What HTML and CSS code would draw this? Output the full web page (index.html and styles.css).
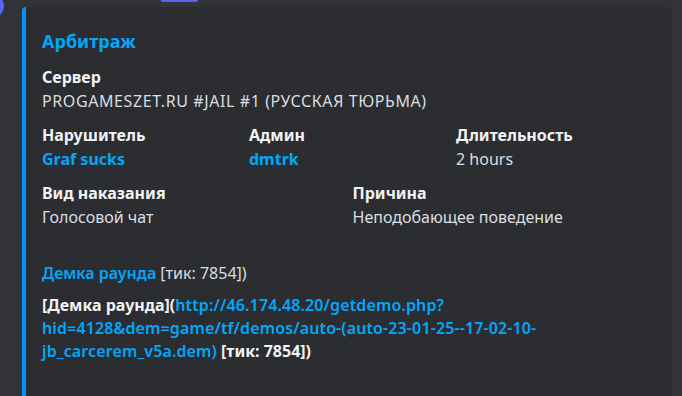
FILE: index.html
```html
<!DOCTYPE html>
<html lang="ru">
<head>
<meta charset="utf-8">
<title>Арбитраж</title>
<link rel="stylesheet" href="styles.css">
</head>
<body>
<div class="page">
  <span class="deco-avatar"></span>
  <span class="deco-button"></span>
  <article class="embed">
    <h2 class="embed-title">Арбитраж</h2>
    <div class="fields">
      <div class="field full">
        <div class="field-name">Сервер</div>
        <div class="field-value wide">PROGAMESZET.RU #JAIL #1 (РУССКАЯ ТЮРЬМА)</div>
      </div>
      <div class="field third">
        <div class="field-name">Нарушитель</div>
        <div class="field-value"><a class="link bolder">Graf sucks</a></div>
      </div>
      <div class="field third">
        <div class="field-name">Админ</div>
        <div class="field-value"><a class="link bolder">dmtrk</a></div>
      </div>
      <div class="field third">
        <div class="field-name">Длительность</div>
        <div class="field-value">2 hours</div>
      </div>
      <div class="field half">
        <div class="field-name">Вид наказания</div>
        <div class="field-value">Голосовой чат</div>
      </div>
      <div class="field half">
        <div class="field-name">Причина</div>
        <div class="field-value">Неподобающее поведение</div>
      </div>
    </div>
    <p class="demo-line"><a class="link strong">Демка раунда</a> [тик: 7854])</p>
    <p class="embed-extra"><b class="bold">[Демка раунда](</b><a class="link strong url">http://46.174.48.20/getdemo.php?<br>hid=4128&amp;dem=game/tf/demos/auto-(auto-23-01-25--17-02-10-<br>jb_carcerem_v5a.dem)</a> <b class="bold">[тик: 7854])</b></p>
  </article>
</div>
</body>
</html>
```
FILE: styles.css
```css
html, body {
  margin: 0;
  padding: 0;
  background: #313338;
  height: 100%;
  overflow: hidden;
}

.page {
  position: relative;
  padding: 7px 10px 0 22px;
  font-family: "Noto Sans", "Open Sans", sans-serif;
  font-size: 16px;
  line-height: 22px;
  color: #dbdee1;
}

.deco-avatar {
  position: absolute;
  left: -12px;
  top: -4px;
  width: 16px;
  height: 20px;
  border-radius: 50%;
  background: #5865f2;
}

.deco-button {
  position: absolute;
  left: 160px;
  top: -6px;
  width: 39px;
  height: 8px;
  border-radius: 4px;
  background: #5865f2;
}

.embed {
  width: 613px;
  height: 400px;
  box-sizing: content-box;
  background: #2b2d31;
  border-left: 4px solid #0094ff;
  border-radius: 4px;
  padding: 23px 17px 0 16px;
}

.embed-title {
  margin: 0;
  font-size: 18px;
  line-height: 22px;
  font-weight: 700;
  color: #00a8fc;
}

.fields {
  display: grid;
  grid-template-columns: repeat(6, 1fr);
  column-gap: 8px;
  row-gap: 12px;
  margin-top: 14px;
}

.field.full { grid-column: span 6; }
.field.half { grid-column: span 3; }
.field.third { grid-column: span 2; }

.field-name {
  font-weight: 700;
  color: #f2f3f5;
  margin-bottom: 2px;
}

.field-value {
  color: #dbdee1;
}

.wide {
  letter-spacing: 0.6px;
}

.link {
  color: #00a8fc;
  text-decoration: none;
}

.strong {
  font-weight: 600;
}

.bolder {
  font-weight: 700;
}

.url {
  letter-spacing: 0.12px;
}

.bold {
  font-weight: 700;
  color: #f2f3f5;
}

.demo-line {
  margin: 34px 0 0;
}

.embed-extra {
  margin: 10px 0 0;
  line-height: 23px;
}
```
